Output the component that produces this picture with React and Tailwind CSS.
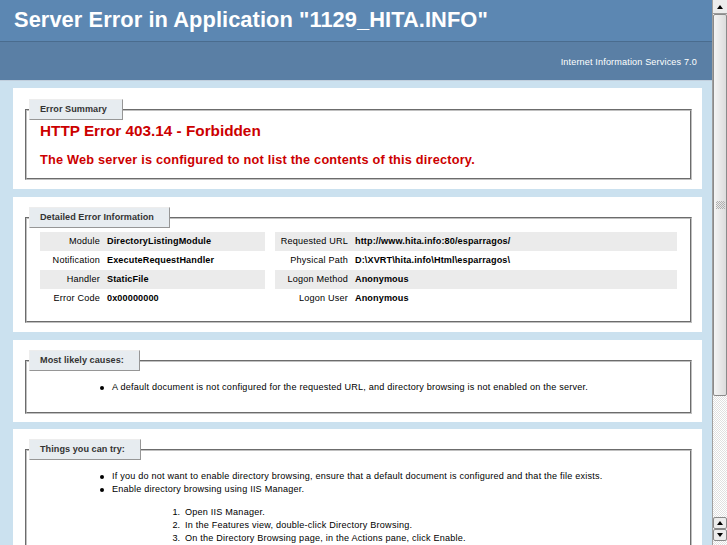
function Box({ className, fsClass, legend, children }) {
  return (
    <div className={`ml-[13px] w-[689px] bg-white pl-[12px] pr-[10px] ${className}`}>
      <div className={`border-2 border-[#c0c0c0] px-[13px] [border-style:groove] ${fsClass}`}>
        <div className="-ml-[11px] -mt-[12px] w-fit whitespace-nowrap border border-b-[#969696] border-l-[#EDEDED] border-r-[#969696] border-t-[#EDEDED] bg-[#E7ECF0] pb-[4px] pl-[10px] pr-[15px] pt-[4px] font-bold leading-[11px] tracking-[0.05px] text-[#333333]">
          {legend}
        </div>
        {children}
      </div>
    </div>
  );
}

function Row({ label, value, alt, labelW }) {
  return (
    <div className={`flex h-[19px] leading-[18px] ${alt ? "bg-[#EBEBEB]" : ""}`}>
      <div className={`shrink-0 pr-[7px] text-right tracking-[0.2px] ${labelW}`}>{label}</div>
      <div className="whitespace-nowrap font-bold tracking-[0.12px]">{value}</div>
    </div>
  );
}

function Bullet({ children, sub }) {
  return (
    <li className="flex pl-[60px] leading-[13px]">
      <span className="w-[12px] shrink-0">
        <span className="mt-[5px] block h-[4px] w-[4px] rounded-full bg-black" />
      </span>
      <div>
        <div className="whitespace-nowrap tracking-[0.21px]">{children}</div>
        {sub}
      </div>
    </li>
  );
}

function Num({ n, children }) {
  return (
    <li className="ml-[55px] flex leading-[13px]">
      <span className="w-[13px] shrink-0 text-right">{n}.</span>
      <span className="ml-[5px] whitespace-nowrap tracking-[0.21px]">{children}</span>
    </li>
  );
}

function Tri({ down }) {
  return down ? (
    <div className="h-0 w-0 border-x-[3px] border-t-[4px] border-x-transparent border-t-black" />
  ) : (
    <div className="h-0 w-0 border-x-[3px] border-b-[4px] border-x-transparent border-b-black" />
  );
}

export default function App() {
  return (
    <div className="flex h-[545px] w-[727px] overflow-hidden bg-[#CBE1EF] font-['Liberation_Sans',Arial,sans-serif] text-[9.1px] text-black">
      <div className="w-[712px] shrink-0">
        <div className="h-[41px] bg-[#5C87B2] pl-[14px] pt-[7px]">
          <h1 className="whitespace-nowrap text-[21.84px] font-bold leading-[25px] tracking-[0.07px] text-white">
            Server Error in Application "1129_HITA.INFO"
          </h1>
        </div>
        <div className="h-[40px] border-b border-t border-b-[#C1CFDD] border-t-[#4A6C8E] bg-[#5A7FA5] pr-[15px] pt-[15px] text-right leading-[11px] tracking-[0.15px] text-white">
          Internet Information Services 7.0
        </div>

        <Box className="mt-[7px] pb-[9px] pt-[21px]" fsClass="pb-[11px]" legend="Error Summary">
          <h2 className="mt-[2px] text-[15.3px] font-bold leading-[18px] text-[#CC0000]">
            HTTP Error 403.14 - Forbidden
          </h2>
          <h3 className="mt-[12px] text-[12.74px] font-bold leading-[15px] tracking-[0.2px] text-[#CC0000]">
            The Web server is configured to not list the contents of this directory.
          </h3>
        </Box>

        <Box className="mt-[8px] pb-[9px] pt-[20px]" fsClass="pb-[13px]" legend="Detailed Error Information">
          <div className="mt-[4px] flex gap-[10px]">
            <div className="w-[225px] shrink-0">
              <Row alt labelW="w-[67px]" label="Module" value="DirectoryListingModule" />
              <Row labelW="w-[67px]" label="Notification" value="ExecuteRequestHandler" />
              <Row alt labelW="w-[67px]" label="Handler" value="StaticFile" />
              <Row labelW="w-[67px]" label="Error Code" value="0x00000000" />
            </div>
            <div className="flex-1">
              <Row alt labelW="w-[80px]" label="Requested URL" value="http://www.hita.info:80/esparragos/" />
              <Row labelW="w-[80px]" label="Physical Path" value="D:\XVRT\hita.info\Html\esparragos\" />
              <Row alt labelW="w-[80px]" label="Logon Method" value="Anonymous" />
              <Row labelW="w-[80px]" label="Logon User" value="Anonymous" />
            </div>
          </div>
        </Box>

        <Box className="mt-[8px] pb-[8px] pt-[20px]" fsClass="pb-[10px]" legend="Most likely causes:">
          <ul className="mb-[8px] mt-[10px]">
            <Bullet>
              A default document is not configured for the requested URL, and directory browsing is not enabled on the server.
            </Bullet>
          </ul>
        </Box>

        <Box className="mt-[7px] pb-[40px] pt-[20px]" fsClass="pb-[20px]" legend="Things you can try:">
          <ul className="mt-[10px]">
            <Bullet>
              If you do not want to enable directory browsing, ensure that a default document is configured and that the file exists.
            </Bullet>
            <Bullet
              sub={
                <ol className="-ml-[112px] mt-[10px] pl-[112px]">
                  <Num n={1}>Open IIS Manager.</Num>
                  <Num n={2}>In the Features view, double-click Directory Browsing.</Num>
                  <Num n={3}>On the Directory Browsing page, in the Actions pane, click Enable.</Num>
                </ol>
              }
            >
              Enable directory browsing using IIS Manager.
            </Bullet>
          </ul>
        </Box>
      </div>

      <div className="flex w-[15px] shrink-0 flex-col border-l border-[#a0a0a0] bg-[image:repeating-conic-gradient(#e0e0e0_0%_25%,#ffffff_0%_50%)] bg-[length:2px_2px]">
        <div className="flex h-[14px] shrink-0 items-center justify-center border-b border-[#9a9a9a] bg-[#ececec]">
          <Tri />
        </div>
        <div className="flex h-[382px] shrink-0 items-center justify-center rounded-[2px] border border-[#8a8a8a] bg-[linear-gradient(to_right,#f4f4f4,#dcdcdc)]">
          <div className="h-[8px] w-[9px] bg-[image:repeating-conic-gradient(#b0b0b0_0%_25%,transparent_0%_50%)] bg-[length:2px_2px]" />
        </div>
        <div className="flex-1" />
        <div className="flex h-[12px] shrink-0 items-center justify-center rounded-[2px] border border-[#8a8a8a] bg-[#ececec]">
          <Tri />
        </div>
        <div className="flex h-[12px] shrink-0 items-center justify-center rounded-[2px] border border-[#8a8a8a] bg-[#ececec]">
          <Tri down />
        </div>
        <div className="h-[4px] shrink-0" />
      </div>
    </div>
  );
}
